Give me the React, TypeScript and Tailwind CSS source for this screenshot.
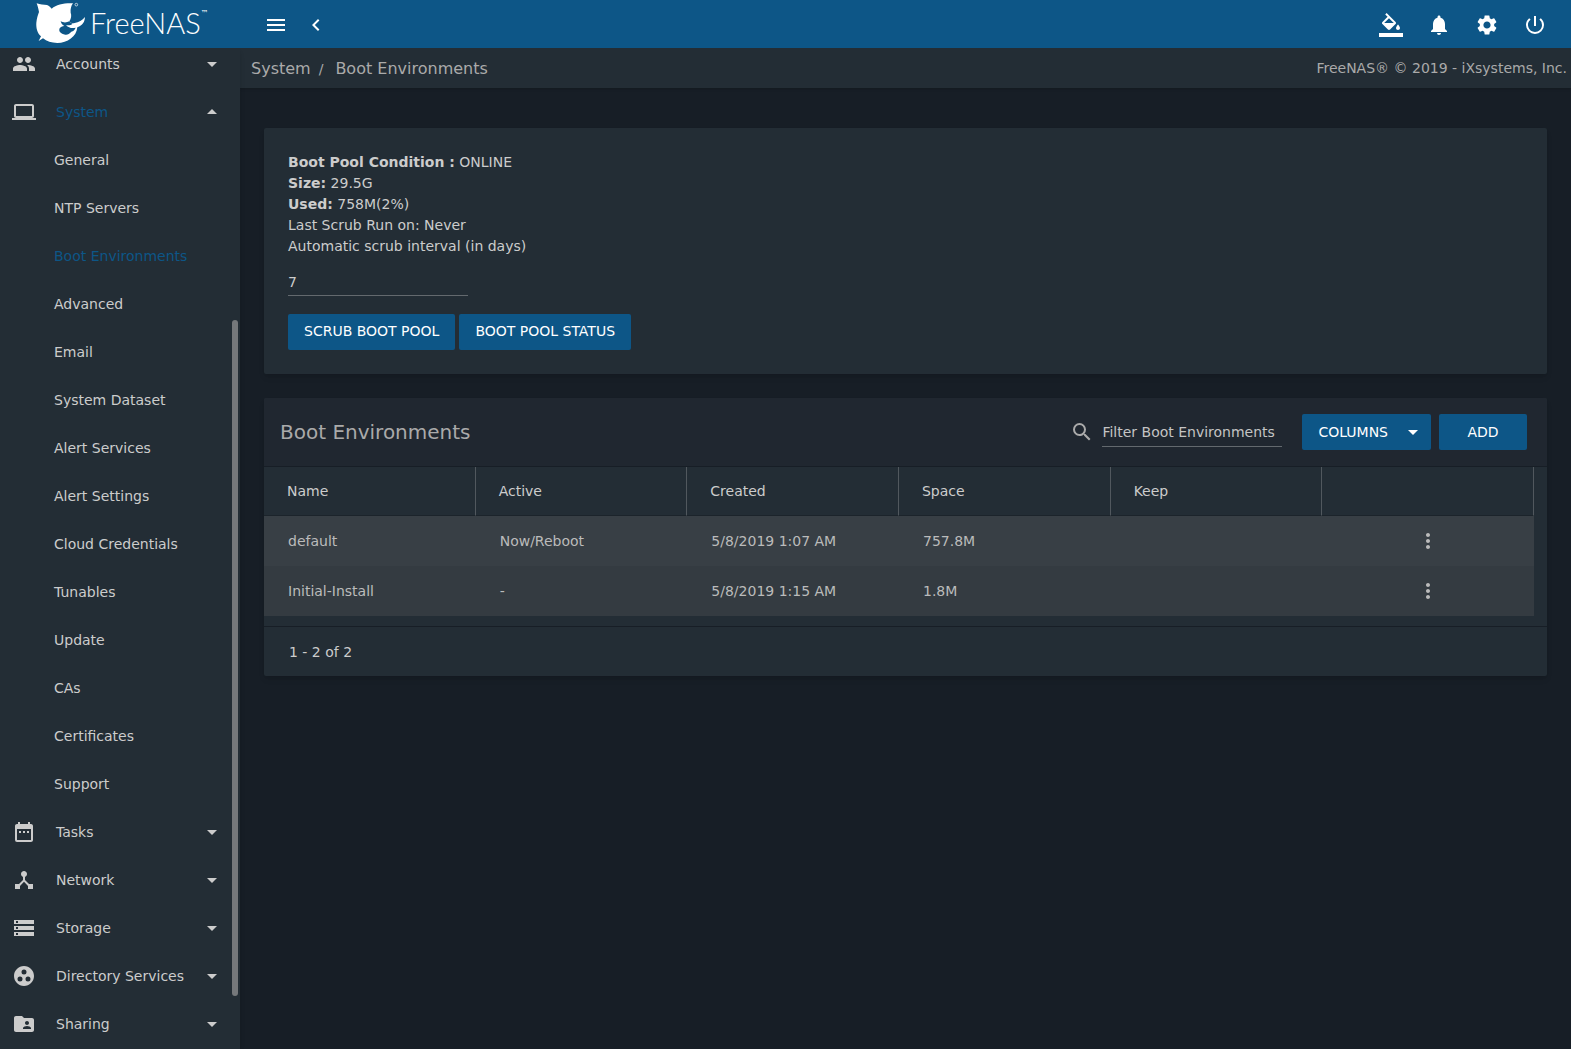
import type { ReactNode } from "react";
import type { IconType } from "react-icons";
import {
  MdArrowDropDown,
  MdArrowDropUp,
  MdChevronLeft,
  MdDateRange,
  MdDeviceHub,
  MdFolderShared,
  MdGroupWork,
  MdLaptop,
  MdMenu,
  MdMoreVert,
  MdNotifications,
  MdPeople,
  MdPowerSettingsNew,
  MdSearch,
  MdSettings,
  MdStorage,
} from "react-icons/md";

const systemLinks = [
  "General",
  "NTP Servers",
  "Boot Environments",
  "Advanced",
  "Email",
  "System Dataset",
  "Alert Services",
  "Alert Settings",
  "Cloud Credentials",
  "Tunables",
  "Update",
  "CAs",
  "Certificates",
  "Support",
];

const lowerSections: { label: string; icon: IconType }[] = [
  { label: "Tasks", icon: MdDateRange },
  { label: "Network", icon: MdDeviceHub },
  { label: "Storage", icon: MdStorage },
  { label: "Directory Services", icon: MdGroupWork },
  { label: "Sharing", icon: MdFolderShared },
];

const columns = ["Name", "Active", "Created", "Space", "Keep", ""];

const environments = [
  { name: "default", active: "Now/Reboot", created: "5/8/2019 1:07 AM", space: "757.8M", keep: "" },
  { name: "Initial-Install", active: "-", created: "5/8/2019 1:15 AM", space: "1.8M", keep: "" },
];

function Logo() {
  return (
    <a href="#" className="flex h-12 w-60 shrink-0 items-start pt-[2px] pl-9 text-white">
      <svg width="50" height="42" viewBox="0 0 150 126" fill="currentColor" aria-hidden="true">
        {/* body */}
        <path d="M2 4 C12 8 24 8 33 9 C40 12 44 16 47 20 C62 7 84 3 111 4 C105 12 103 22 104 32 C107 40 106 50 100 58 C104 64 110 65 116 63 C128 61 139 55 147 45 C146 60 140 70 124 76 C122 104 94 123 64 123 C46 123 32 118 21 109 L8 117 L15 103 C3 92 0 76 1 62 C2 50 6 38 9 30 C7 20 5 12 2 4 Z" />
        {/* gap under the pectoral fin */}
        <path d="M74 57 C82 63 92 62 100 58 C103 62 106 64 110 65 C104 70 97 71 90 69 C98 78 108 80 119 77 C116 84 112 88 106 89 C100 96 94 99 88 98 C74 96 67 88 71 79 C73 75 79 73 85 72 C79 69 75 64 74 57 Z" fill="#0d5687" />
        <circle cx="121" cy="8" r="4" fill="none" stroke="currentColor" strokeWidth="2" />
      </svg>
      <span className="ml-1 pt-1 font-['Lato'] text-[29px] leading-[34px] font-light">FreeNAS</span>
      <span className="pt-1.5 text-[8px]">™</span>
    </a>
  );
}

function FillIcon() {
  return (
    <svg width="24" height="24" viewBox="0 0 24 24" fill="currentColor" aria-hidden="true">
      <path d="M16.56 8.94L7.62 0 6.21 1.41l2.38 2.38-5.15 5.15c-.59.59-.59 1.54 0 2.12l5.5 5.5c.29.29.68.44 1.06.44s.77-.15 1.06-.44l5.5-5.5c.59-.58.59-1.53 0-2.12zM5.21 10L10 5.21 14.79 10H5.21zM19 11.5s-2 2.17-2 3.5c0 1.1.9 2 2 2s2-.9 2-2c0-1.33-2-3.5-2-3.5zM0 20h24v4H0z" />
    </svg>
  );
}

function TopBar() {
  return (
    <header className="relative z-10 flex h-12 items-center bg-[#0d5687] text-white">
      <Logo />
      <div className="flex flex-1 items-center gap-4 pt-0.5 pl-6">
        <button type="button" aria-label="Toggle menu">
          <MdMenu size={24} />
        </button>
        <button type="button" aria-label="Collapse menu">
          <MdChevronLeft size={24} />
        </button>
      </div>
      <div className="flex items-center gap-6 pt-0.5 pr-6">
        <button type="button" aria-label="Theme">
          <FillIcon />
        </button>
        <button type="button" aria-label="Notifications">
          <MdNotifications size={24} />
        </button>
        <button type="button" aria-label="Settings">
          <MdSettings size={24} />
        </button>
        <button type="button" aria-label="Power">
          <MdPowerSettingsNew size={24} />
        </button>
      </div>
    </header>
  );
}

function Section({ label, icon: Icon, open = false }: { label: string; icon: IconType; open?: boolean }) {
  return (
    <button type="button" aria-expanded={open} className="flex h-12 w-full items-center pr-4 pl-3 text-left">
      <Icon size={24} />
      <span className={open ? "ml-5 flex-1 text-[#0d5687]" : "ml-5 flex-1"}>{label}</span>
      {open ? <MdArrowDropUp size={24} /> : <MdArrowDropDown size={24} />}
    </button>
  );
}

function Sidebar() {
  return (
    <aside className="relative w-60 shrink-0 bg-[#232d35] shadow-md">
      {/* list is scrolled a little past its first entry */}
      <nav className="-mt-2">
        <Section label="Accounts" icon={MdPeople} />
        <Section label="System" icon={MdLaptop} open />
        <ul>
          {systemLinks.map((label) => (
            <li key={label}>
              <a
                href="#"
                className={
                  label === "Boot Environments"
                    ? "flex h-12 items-center pl-[54px] text-[#0d5687]"
                    : "flex h-12 items-center pl-[54px]"
                }
              >
                {label}
              </a>
            </li>
          ))}
        </ul>
        {lowerSections.map((s) => (
          <Section key={s.label} label={s.label} icon={s.icon} />
        ))}
      </nav>
      <div className="absolute top-[272px] right-0.5 bottom-[53px] w-1.5 rounded-full bg-[#75787b]" />
    </aside>
  );
}

function BlueButton({ children }: { children: ReactNode }) {
  return (
    <button
      type="button"
      className="flex h-9 items-center justify-center rounded-xs bg-[#0d5687] px-4 pb-0.5 text-white"
    >
      {children}
    </button>
  );
}

function PoolCard() {
  return (
    <section className="rounded-xs bg-[#232d35] p-6 shadow-md">
      <div className="leading-[21px]">
        <p>
          <b>Boot Pool Condition :</b> ONLINE
        </p>
        <p>
          <b>Size:</b> 29.5G
        </p>
        <p>
          <b>Used:</b> 758M(2%)
        </p>
        <p>Last Scrub Run on: Never</p>
        <label htmlFor="interval">Automatic scrub interval (in days)</label>
      </div>
      <input
        id="interval"
        defaultValue="7"
        className="mt-3 block h-[27px] w-[180px] border-b border-[#63696e] bg-transparent outline-none"
      />
      <div className="mt-[18px] flex gap-1">
        <BlueButton>SCRUB BOOT POOL</BlueButton>
        <BlueButton>BOOT POOL STATUS</BlueButton>
      </div>
    </section>
  );
}

function EnvironmentsCard() {
  return (
    <section className="overflow-hidden rounded-xs bg-[#232d35] shadow-md">
      <div className="flex h-[69px] items-center border-b border-[#171e26] bg-[#202730] pr-5 pl-4">
        <h2 className="flex-1 text-xl text-[#aaaaaa]">Boot Environments</h2>
        <MdSearch size={24} className="mr-2 text-[#aaaaaa]" />
        <input
          aria-label="Filter Boot Environments"
          placeholder="Filter Boot Environments"
          className="mr-5 h-[30px] w-[180px] border-b border-[#63696e] bg-transparent outline-none placeholder:text-[#c4c4c4]"
        />
        <div className="flex gap-2">
          <button type="button" className="flex h-9 items-center rounded-xs bg-[#0d5687] pr-1.5 pl-4 text-white">
            COLUMNS
            <MdArrowDropDown size={24} className="ml-[13px]" />
          </button>
          <button type="button" className="h-9 w-[88px] rounded-xs bg-[#0d5687] text-white">
            ADD
          </button>
        </div>
      </div>
      <div className="pr-[13px] pb-2.5">
        <table className="w-full table-fixed border-separate border-spacing-0 text-left">
          <thead>
            <tr>
              {columns.map((c, i) => (
                <th key={i} className="h-[49px] border-r border-b border-r-[#51585e] border-b-[#1c242b] pl-[23px] font-normal">
                  {c}
                </th>
              ))}
            </tr>
          </thead>
          <tbody>
            {environments.map((env) => (
              <tr key={env.name} className="h-[50px] bg-[#343b41] text-[#bbbbbb] odd:bg-[#383f45]">
                <td className="pl-6">{env.name}</td>
                <td className="pl-6">{env.active}</td>
                <td className="pl-6">{env.created}</td>
                <td className="pl-6">{env.space}</td>
                <td className="pl-6">{env.keep}</td>
                <td>
                  <button type="button" aria-label={`Options for ${env.name}`} className="mx-auto block">
                    <MdMoreVert size={24} />
                  </button>
                </td>
              </tr>
            ))}
          </tbody>
        </table>
      </div>
      <div className="flex h-[50px] items-center border-t border-[#171e26] pl-[25px]">1 - 2 of 2</div>
    </section>
  );
}

export default function App() {
  return (
    <div className="flex min-h-screen flex-col bg-[#171e26] font-['DejaVu_Sans',sans-serif] text-sm text-[#cccccc]">
      <TopBar />
      <div className="flex flex-1">
        <Sidebar />
        <div className="min-w-0 flex-1">
          <div className="flex h-10 items-center justify-between bg-[#232d35] pr-1 pl-[11px] text-[#aaaaaa] shadow-sm">
            <nav aria-label="Breadcrumb" className="flex items-center pt-0.5 text-base">
              <a href="#">System</a>
              <span className="mr-3 ml-2 text-sm">/</span>
              <a href="#">Boot Environments</a>
            </nav>
            <span>FreeNAS® © 2019 - iXsystems, Inc.</span>
          </div>
          <main className="flex flex-col gap-6 px-6 pt-10 pb-6">
            <PoolCard />
            <EnvironmentsCard />
          </main>
        </div>
      </div>
    </div>
  );
}
